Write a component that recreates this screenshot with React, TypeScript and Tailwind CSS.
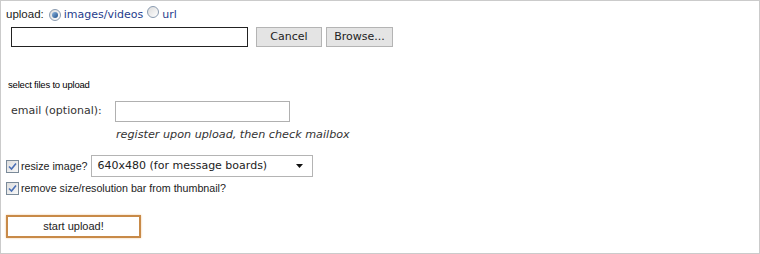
import React from "react"

const tahoma = "font-['Liberation_Sans',Arial,sans-serif]"
const verdana = "font-['DejaVu_Sans',Verdana,sans-serif]"

function Radio({ checked }: { checked?: boolean }) {
  return (
    <span className="inline-flex h-[12px] w-[12px] items-center justify-center rounded-full border border-[#8a9bb0] bg-gradient-to-br from-[#dcdcdc] to-[#ffffff]">
      {checked ? (
        <span className="h-[6px] w-[6px] rounded-full bg-gradient-to-br from-[#8fb8e0] to-[#1d4f8a]" />
      ) : null}
    </span>
  )
}

function Check() {
  return (
    <span className="inline-flex h-[13px] w-[13px] items-center justify-center border border-[#7a8a99] bg-gradient-to-br from-[#dedede] to-[#f8f8f8]">
      <svg width="9" height="9" viewBox="0 0 9 9">
        <path d="M1 4.5 L3.5 7 L8 1.5" fill="none" stroke="#4a6fb5" strokeWidth="1.6" />
      </svg>
    </span>
  )
}

export default function App() {
  return (
    <div className="h-[254px] w-[760px] border border-[#cbcbcb] bg-white text-[#222]">
      {/* upload type */}
      <div className={`mt-[7px] ml-[5px] flex h-[14px] items-center text-[11.5px] ${tahoma}`}>
        <span>upload:</span>
        <span className="ml-[5px]">
          <Radio checked />
        </span>
        <span className={`ml-[3px] text-[11px] text-[#1f3d8c] ${verdana}`}>images/videos</span>
        <span className="ml-[4px]">
          <Radio />
        </span>
        <span className={`ml-[3px] text-[11px] text-[#1f3d8c] ${verdana}`}>url</span>
      </div>

      {/* file picker */}
      <div className={`mt-[5px] ml-[10px] flex items-center ${verdana}`}>
        <div className="h-[20px] w-[237px] border border-[#222] bg-white" />
        <button className="ml-[8px] h-[20px] w-[66px] border border-[#b4b4b4] bg-[#e4e4e4] text-[11px] text-[#222]">
          Cancel
        </button>
        <button className="ml-[4px] h-[20px] w-[67px] border border-[#b4b4b4] bg-[#e4e4e4] text-[11px] text-[#222]">
          Browse...
        </button>
      </div>

      <div className={`mt-[33px] ml-[7px] text-[9.5px] leading-[10px] tracking-[-0.2px] text-black ${tahoma}`}>
        select files to upload
      </div>

      {/* email */}
      <div className={`mt-[11px] flex items-center text-[11px] text-[#333] ${verdana}`}>
        <span className="ml-[10px] w-[104px]">email (optional):</span>
        <div className="h-[21px] w-[175px] border border-[#b0b0b0] bg-white" />
      </div>
      <div className={`mt-[6px] ml-[115px] text-[11.2px] italic leading-[13px] text-[#333] ${verdana}`}>
        register upon upload, then check mailbox
      </div>

      {/* options */}
      <div className={`mt-[14px] ml-[5px] flex items-center text-[10.7px] ${tahoma}`}>
        <Check />
        <span className="ml-[2px]">resize image?</span>
        <div className={`ml-[3px] flex h-[22px] w-[222px] items-center justify-between border border-[#b4b4b4] bg-white pr-[9px] pl-[6px] text-[11px] text-[#222] ${verdana}`}>
          <span>640x480 (for message boards)</span>
          <svg width="7" height="4" viewBox="0 0 7 4">
            <path d="M0 0 H7 L3.5 4 Z" fill="#111" />
          </svg>
        </div>
      </div>
      <div className={`mt-[3px] ml-[5px] flex items-center text-[10.7px] ${tahoma}`}>
        <Check />
        <span className="ml-[2px]">remove size/resolution bar from thumbnail?</span>
      </div>

      <button
        className={`mt-[19px] ml-[5px] h-[23px] w-[135px] border-2 border-[#c88a48] bg-white text-[11px] text-[#222] shadow-[0_0_2px_#f0c89a] ${tahoma}`}
      >
        start upload!
      </button>
    </div>
  )
}
